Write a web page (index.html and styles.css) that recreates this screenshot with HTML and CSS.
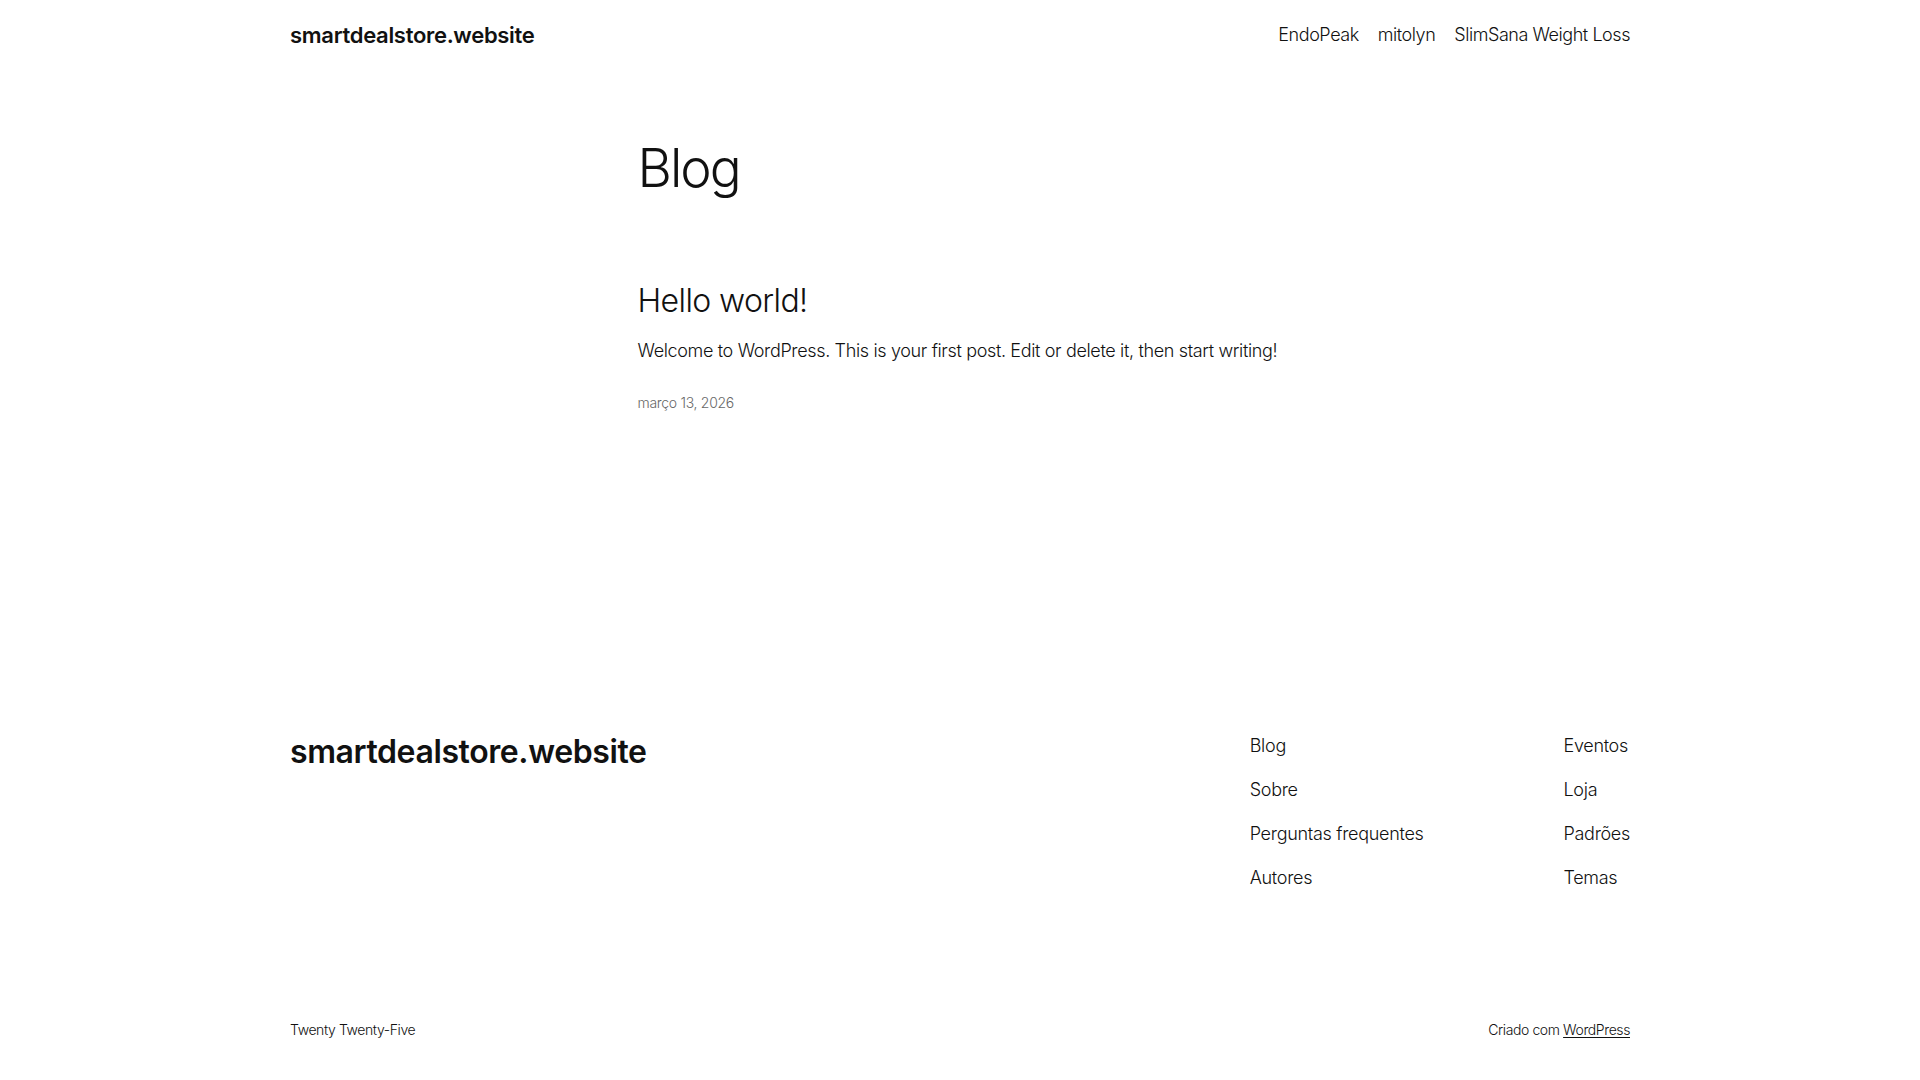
FILE: index.html
```html
<!DOCTYPE html>
<html lang="pt-BR">
<head>
<meta charset="utf-8">
<title>Blog – smartdealstore.website</title>
<link rel="stylesheet" href="styles.css">
</head>
<body>
<header class="site-header">
  <div class="wide header-inner">
    <a class="site-title" href="#">smartdealstore.website</a>
    <nav class="main-nav">
      <a href="#">EndoPeak</a>
      <a href="#">mitolyn</a>
      <a href="#">SlimSana Weight Loss</a>
    </nav>
  </div>
</header>

<main class="site-main">
  <div class="content">
    <h1 class="page-title">Blog</h1>
    <article class="post">
      <h2 class="post-title"><a href="#">Hello world!</a></h2>
      <p class="post-excerpt">Welcome to WordPress. This is your first post. Edit or delete it, then start writing!</p>
      <div class="post-date">março 13, 2026</div>
    </article>
  </div>
</main>

<footer class="site-footer">
  <div class="wide footer-top">
    <a class="footer-title" href="#">smartdealstore.website</a>
    <div class="footer-navs">
      <nav class="footer-nav">
        <a href="#">Blog</a>
        <a href="#">Sobre</a>
        <a href="#">Perguntas frequentes</a>
        <a href="#">Autores</a>
      </nav>
      <nav class="footer-nav">
        <a href="#">Eventos</a>
        <a href="#">Loja</a>
        <a href="#">Padrões</a>
        <a href="#">Temas</a>
      </nav>
    </div>
  </div>
  <div class="wide footer-bottom">
    <span>Twenty Twenty-Five</span>
    <span>Criado com <a class="wp-link" href="#">WordPress</a></span>
  </div>
</footer>
</body>
</html>
```

FILE: styles.css
```css
html, body {
  margin: 0;
  padding: 0;
  background: #ffffff;
}

body {
  font-family: Inter, "Noto Sans", "Liberation Sans", sans-serif;
  font-weight: 300;
  color: #111111;
  -webkit-font-smoothing: antialiased;
}

a {
  color: inherit;
  text-decoration: none;
}

.wide {
  width: 1340px;
  margin: 0 auto;
}

/* Header */
.header-inner {
  height: 70px;
  display: flex;
  align-items: center;
  justify-content: space-between;
}

.site-title {
  font-size: 22px;
  font-weight: 600;
  letter-spacing: -0.3px;
  line-height: 1.2;
}

.main-nav {
  display: flex;
  gap: 19px;
  font-size: 18px;
  line-height: 1.4;
  letter-spacing: -0.45px;
}

/* Main */
.site-main {
  padding-top: 67px;
  padding-bottom: 320px;
}

.content {
  width: 645px;
  margin: 0 auto;
}

.page-title {
  margin: 0;
  font-size: 53px;
  font-weight: 300;
  line-height: 1.2;
  letter-spacing: -2px;
}

.post {
  margin-top: 81px;
}

.post-title {
  margin: 0;
  font-size: 32px;
  font-weight: 300;
  line-height: 1.2;
  letter-spacing: -0.6px;
}

.post-excerpt {
  margin: 18px 0 0;
  font-size: 18px;
  line-height: 1.4;
  letter-spacing: -0.35px;
}

.post-date {
  margin-top: 30px;
  font-size: 14px;
  line-height: 1.4;
  color: #686868;
  letter-spacing: -0.3px;
}

/* Footer */
.footer-top {
  display: flex;
  justify-content: space-between;
  align-items: flex-start;
}

.footer-title {
  font-size: 32px;
  font-weight: 600;
  line-height: 1.2;
  letter-spacing: -0.4px;
}

.footer-navs {
  display: flex;
  gap: 140px;
}

.footer-nav {
  display: flex;
  flex-direction: column;
  gap: 19px;
  font-size: 18px;
  line-height: 1.4;
  letter-spacing: -0.3px;
}

.footer-bottom {
  margin-top: 129px;
  padding-bottom: 37px;
  display: flex;
  justify-content: space-between;
  font-size: 14px;
  line-height: 1.4;
  letter-spacing: -0.4px;
}

.wp-link {
  text-decoration: underline;
  text-underline-offset: 2px;
}
```
